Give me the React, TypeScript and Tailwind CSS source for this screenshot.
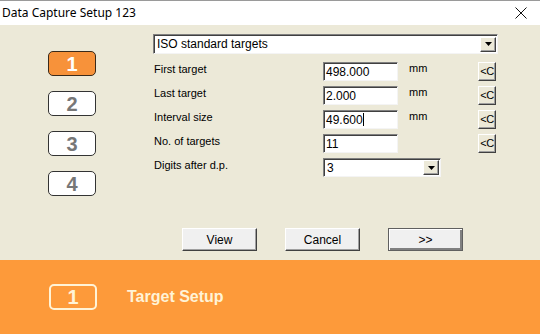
import { FC } from 'react';

const Arrow: FC = () => (
    <div className="w-[16px] h-[15px] bg-[#ece9d8] border border-t-white border-l-white border-b-[#404040] border-r-[#404040] flex items-center justify-center shadow-[inset_-1px_-1px_0_#a0a0a0]">
        <svg width="7" height="4" viewBox="0 0 7 4">
            <polygon points="0,0 7,0 3.5,4" fill="#000" />
        </svg>
    </div>
);

const Field: FC<{ value: string; caret?: boolean }> = ({ value, caret }) => (
    <div className="w-[75px] h-[19px] bg-white border border-t-[#808080] border-l-[#808080] border-b-[#f4f4f4] border-r-[#f4f4f4] shadow-[inset_1px_1px_0_#404040] pl-[2px] flex items-center text-[12px] text-black">
        {value}
        {caret && <span className="inline-block w-px h-[13px] bg-black" />}
    </div>
);

const ClearButton: FC = () => (
    <div className="w-[18px] h-[19px] bg-[#ece9d8] border border-t-white border-l-white border-b-[#404040] border-r-[#404040] shadow-[inset_-1px_-1px_0_#a0a0a0] flex items-center justify-center text-[11px] tracking-[-0.5px] text-black overflow-hidden">
        &lt;C
    </div>
);

const rows = [
    { label: 'First target', value: '498.000', unit: 'mm', clear: true },
    { label: 'Last target', value: '2.000', unit: 'mm', clear: true },
    { label: 'Interval size', value: '49.600', unit: 'mm', clear: true, caret: true },
    { label: 'No. of targets', value: '11', unit: '', clear: true },
];

const StepBox: FC<{ n: number; active?: boolean }> = ({ n, active }) => (
    <div
        className={
            active
                ? 'w-[48px] h-[25px] rounded-[5px] border border-[#3a2a1a] bg-[#f7923a] flex items-center justify-center text-white font-bold text-[20px]'
                : 'w-[48px] h-[25px] rounded-[5px] border border-[#333333] bg-white flex items-center justify-center text-[#777777] font-bold text-[20px]'
        }
    >
        {n}
    </div>
);

const Btn: FC<{ label: string; isDefault?: boolean }> = ({ label, isDefault }) => (
    <div
        className={
            isDefault
                ? 'w-[75px] h-[23px] bg-[#f0f0f0] border border-[#606060] shadow-[inset_1px_1px_0_#fff,inset_-2px_-2px_0_#808080] flex items-center justify-center text-[12px] text-black'
                : 'w-[75px] h-[23px] bg-[#f0f0f0] border border-t-white border-l-white border-b-[#404040] border-r-[#404040] shadow-[inset_-1px_-1px_0_#a0a0a0] flex items-center justify-center text-[12px] text-black'
        }
    >
        {label}
    </div>
);

export default function App() {
    return (
        <div
            className="w-[540px] h-[334px] flex flex-col overflow-hidden"
            style={{ fontFamily: '"Liberation Sans", Arial, sans-serif' }}
        >
            {/* title bar */}
            <div className="h-[25px] bg-white border-t border-[#9a9a9a] flex items-center justify-between pl-[2px] pr-[13px]">
                <span className="text-[12px] text-black" style={{ fontFamily: '"Noto Sans", sans-serif' }}>
                    Data Capture Setup 123
                </span>
                <svg width="12" height="12" viewBox="0 0 12 12">
                    <path d="M0.5 0.5 L11.5 11.5 M11.5 0.5 L0.5 11.5" stroke="#111" strokeWidth="1" />
                </svg>
            </div>

            {/* body */}
            <div className="flex-1 bg-[#ece9d8] flex flex-col">
                <div className="flex">
                    <div className="pl-[48px] pt-[26px] flex flex-col gap-[15px]">
                        <StepBox n={1} active />
                        <StepBox n={2} />
                        <StepBox n={3} />
                        <StepBox n={4} />
                    </div>

                    <div className="ml-[57px] pt-[9px] flex flex-col text-[11px] text-black">
                        <div className="w-[345px] h-[20px] bg-white border border-t-[#808080] border-l-[#808080] border-b-[#f4f4f4] border-r-[#f4f4f4] shadow-[inset_1px_1px_0_#404040] flex items-center justify-between pl-[3px] pr-[1px] text-[12px]">
                            <span>ISO standard targets</span>
                            <Arrow />
                        </div>

                        <div className="flex flex-col gap-[5px] mt-[8px]">
                            {rows.map((r) => (
                                <div key={r.label} className="flex items-start h-[19px]">
                                    <div className="w-[170px] pl-[1px] leading-[14px]">{r.label}</div>
                                    <Field value={r.value} caret={r.caret} />
                                    <div className="w-[80px] pl-[11px] leading-[13px]">{r.unit}</div>
                                    {r.clear && <ClearButton />}
                                </div>
                            ))}
                            <div className="flex items-start h-[19px]">
                                <div className="w-[170px] pl-[1px] leading-[14px]">Digits after d.p.</div>
                                <div className="w-[118px] h-[19px] bg-white border border-t-[#808080] border-l-[#808080] border-b-[#f4f4f4] border-r-[#f4f4f4] shadow-[inset_1px_1px_0_#404040] flex items-center justify-between pl-[3px] pr-[1px] text-[12px]">
                                    <span>3</span>
                                    <Arrow />
                                </div>
                            </div>
                        </div>
                    </div>
                </div>

                <div className="mt-auto pl-[182px] pb-[9px] flex gap-[28px]">
                    <Btn label="View" />
                    <Btn label="Cancel" />
                    <Btn label=">>" isDefault />
                </div>
            </div>

            {/* footer */}
            <div className="h-[74px] bg-[#fd9a3a] flex items-center pl-[49px]">
                <div className="w-[48px] h-[26px] rounded-[5px] border-2 border-[#fff3d6] flex items-center justify-center text-[#fff3d6] font-bold text-[20px]">
                    1
                </div>
                <div className="ml-[30px] text-[#fff3d6] font-bold text-[16px]">Target Setup</div>
            </div>
        </div>
    );
}
